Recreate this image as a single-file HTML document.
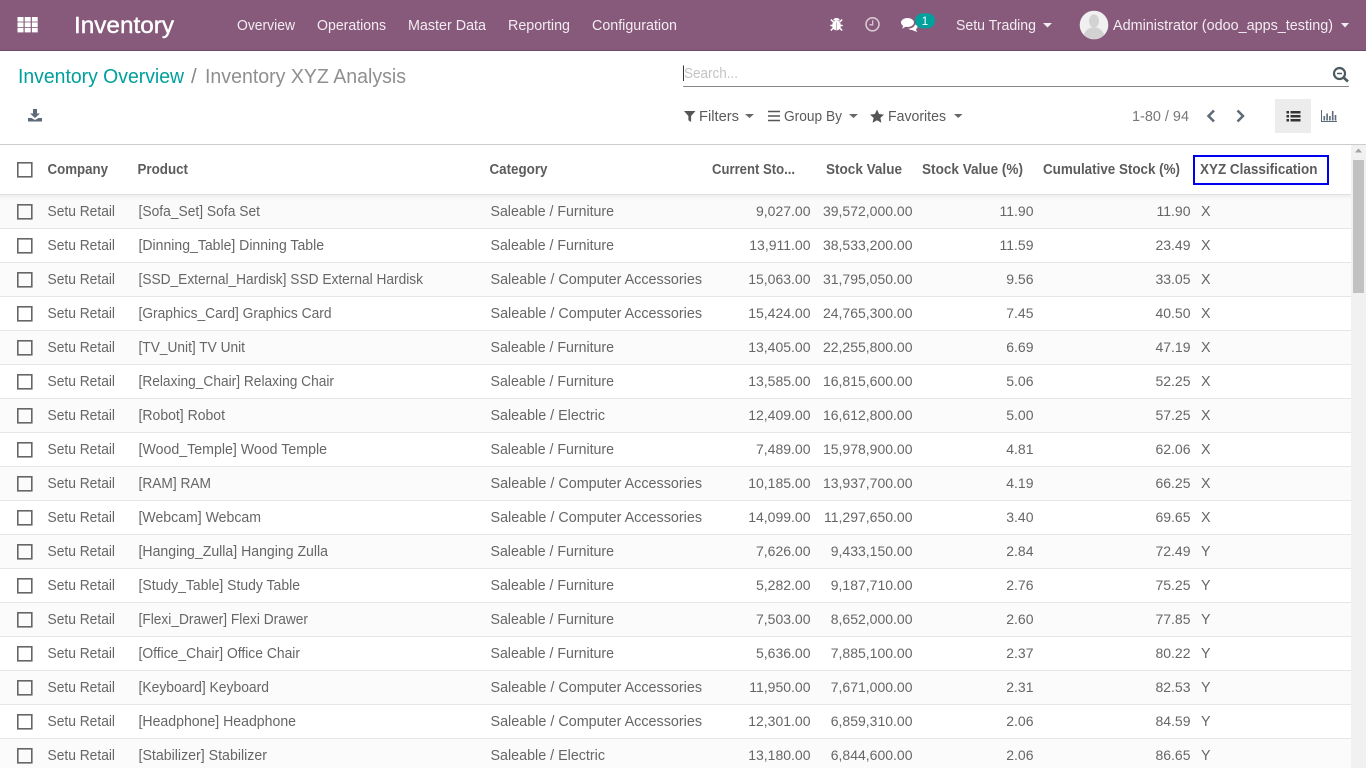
<!DOCTYPE html>
<html><head><meta charset="utf-8"><title>Inventory XYZ Analysis</title>
<style>
html,body{margin:0;padding:0;background:#fff;width:1366px;height:768px;overflow:hidden}
svg{display:block;position:absolute;left:0;top:0}
text{font-family:"Liberation Sans",sans-serif;font-size:14.3px;fill:#666}
.n{fill:#f3ecf1}
.h{font-weight:bold;fill:#5c5c5c}
.e{text-anchor:end;fill:#666;font-size:14px;transform:translateX(-.5px)}
.b{fill:none;stroke:#666;stroke-width:1.6}
.l{fill:#555}
</style></head><body>
<svg width="1366" height="768" viewBox="0 0 1366 768" xmlns="http://www.w3.org/2000/svg">
<defs><linearGradient id="sh" x1="0" y1="0" x2="0" y2="1"><stop offset="0" stop-color="#efefef"/><stop offset="1" stop-color="#fafafa"/></linearGradient></defs>
<rect width="1366" height="50" fill="#875a7b"/>
<rect y="50" width="1366" height="1" fill="#6e4a64"/>
<g fill="#fff">
<rect x="17.5" y="17" width="6" height="4.6"/><rect x="24.7" y="17" width="6" height="4.6"/><rect x="31.9" y="17" width="5.8" height="4.6"/>
<rect x="17.5" y="22.4" width="6" height="4.6"/><rect x="24.7" y="22.4" width="6" height="4.6"/><rect x="31.9" y="22.4" width="5.8" height="4.6"/>
<rect x="17.5" y="27.8" width="6" height="4.6"/><rect x="24.7" y="27.8" width="6" height="4.6"/><rect x="31.9" y="27.8" width="5.8" height="4.6"/>
</g>
<text x="74" y="33" textLength="100" lengthAdjust="spacingAndGlyphs" style="font-size:23.5px;fill:#fff;stroke:#fff;stroke-width:.4">Inventory</text>
<text class="n" x="237" y="30" textLength="58" lengthAdjust="spacingAndGlyphs">Overview</text>
<text class="n" x="317" y="30" textLength="69" lengthAdjust="spacingAndGlyphs">Operations</text>
<text class="n" x="408" y="30" textLength="78" lengthAdjust="spacingAndGlyphs">Master Data</text>
<text class="n" x="508" y="30" textLength="62" lengthAdjust="spacingAndGlyphs">Reporting</text>
<text class="n" x="592" y="30" textLength="85" lengthAdjust="spacingAndGlyphs">Configuration</text>
<g fill="#fff" stroke="#fff">
<ellipse cx="836.5" cy="25.5" rx="4.4" ry="5" stroke="none"/><path d="M833.2 20.5a3.3 2.6 0 0 1 6.6 0z" stroke="none"/>
<path d="M830.8 19.5l2.5 2.5M842.2 19.5l-2.5 2.500M830.3 25.500h3M842.700 25.500h-3M830.800 30.500l2.500-2.500M842.200 30.500l-2.500-2.500" stroke-width="1.500" fill="none"/>
</g>
<rect x="836.100" y="22.500" width=".8" height="8" fill="#b79fb0"/>
<g fill="none" stroke="#d8c8d3" stroke-width="1.600"><circle cx="872.500" cy="24.300" r="6.500"/><path d="M872.700 20.300v4.500h-3.200" stroke-width="1.300"/></g>
<path d="M907.500 18c-3.600 0-6.500 2-6.500 4.500 0 1.400.9 2.600 2.200 3.400l-1.100 2.800 3.500-1.900c.6.100 1.300.2 1.900.2 3.600 0 6.500-2.100 6.500-4.500s-2.900-4.500-6.500-4.500z" fill="#fff"/>
<path d="M915 24.500c-.6 2.600-3.400 4.100-6.800 4.300 1 .8 2.400 1.200 3.900 1.200l5 2-1.200-2.800c1-.7 1.700-1.600 1.700-2.600 0-.8-.9-1.700-2.600-2.100z" fill="#fff"/>
<rect x="915" y="13.300" width="20" height="15" rx="7.500" fill="#00a09d"/>
<text x="925" y="25" text-anchor="middle" style="font-size:11.500px;fill:#fff">1</text>
<text class="n" x="956" y="30" textLength="80" lengthAdjust="spacingAndGlyphs">Setu Trading</text>
<path d="M1043 23h9l-4.500 4.500z" fill="#f3ecf1"/>
<circle cx="1094" cy="25" r="14.300" fill="#f0f0f0"/>
<ellipse cx="1094" cy="21" rx="5" ry="6.500" fill="#d2d2d2"/>
<path d="M1084 35c1-5 5-6.500 7-7.500h6c2 1 6 2.500 7 7.500a14.300 14.300 0 0 1-20 0z" fill="#d2d2d2"/>
<text class="n" x="1113" y="30" textLength="220" lengthAdjust="spacingAndGlyphs">Administrator (odoo_apps_testing)</text>
<path d="M1341 23h8l-4 4.500z" fill="#f3ecf1"/>

<text x="18" y="83" textLength="166" lengthAdjust="spacingAndGlyphs" style="font-size:20.500px;fill:#00a09d">Inventory Overview</text>
<text x="191" y="83" style="font-size:20.500px;fill:#888">/</text>
<text x="205" y="83" textLength="201" lengthAdjust="spacingAndGlyphs" style="font-size:20.500px;fill:#8f8f8f">Inventory XYZ Analysis</text>

<path d="M33 109h4v4.500h3l-5 4.500-5-4.500h3z" fill="#5d6a78"/>
<path d="M28 118h3.500l3.500 2 3.500-2h3.500v3.500h-14z" fill="#5d6a78"/>

<rect x="683" y="65.500" width="1" height="15.500" fill="#333"/>
<text x="684" y="78" textLength="54" lengthAdjust="spacingAndGlyphs" style="fill:#c4c4c4">Search...</text>
<rect x="683" y="86" width="666" height="1" fill="#888"/>
<circle cx="1339.500" cy="73.500" r="5.500" fill="none" stroke="#4c5a60" stroke-width="2.200"/>
<path d="M1337 73.500h5" stroke="#4c5a60" stroke-width="1.500"/>
<path d="M1343.500 77.500l4.500 4" stroke="#4c5a60" stroke-width="2.600"/>

<path d="M684 111h11.500l-4.400 5v6l-2.700-1.800v-4.200z" fill="#555"/>
<text x="699" y="121" textLength="40" lengthAdjust="spacingAndGlyphs" style="fill:#5a5a5a">Filters</text>
<path d="M745 114h9l-4.500 4z" fill="#666"/>
<path d="M768 111.500h12M768 116h12M768 120.500h12" stroke="#555" stroke-width="1.500"/>
<text x="784" y="121" textLength="58" lengthAdjust="spacingAndGlyphs" style="fill:#5a5a5a">Group By</text>
<path d="M849 114h9l-4.500 4z" fill="#666"/>
<path d="M877 109.500l2.100 4.500 4.900.6-3.600 3.300 1 4.800-4.400-2.400-4.400 2.400 1-4.800-3.600-3.300 4.900-.6z" fill="#555"/>
<text x="888" y="121" textLength="58" lengthAdjust="spacingAndGlyphs" style="fill:#5a5a5a">Favorites</text>
<path d="M954 114h8.500l-4.250 4z" fill="#666"/>

<text x="1132" y="121" textLength="57" lengthAdjust="spacingAndGlyphs" style="fill:#777">1-80 / 94</text>
<path d="M1214 110.500l-5.500 5.500 5.500 5.500" fill="none" stroke="#5d6a78" stroke-width="2.500"/>
<path d="M1237.500 110.500l5.500 5.500-5.500 5.500" fill="none" stroke="#5d6a78" stroke-width="2.500"/>
<rect x="1275" y="99" width="36" height="34" fill="#ececec"/>
<g fill="#333"><rect x="1286.500" y="111" width="2.500" height="2.500"/><rect x="1286.500" y="115" width="2.500" height="2.500"/><rect x="1286.500" y="119" width="2.500" height="2.500"/><rect x="1290.500" y="111" width="10" height="2.500"/><rect x="1290.500" y="115" width="10" height="2.500"/><rect x="1290.500" y="119" width="10" height="2.500"/></g>
<path d="M1321.500 110v11.500h15.500" fill="none" stroke="#5d6a78" stroke-width="1"/>
<g fill="#5d6a78"><rect x="1323.500" y="116" width="1.600" height="4.500"/><rect x="1326.300" y="113.500" width="1.600" height="7"/><rect x="1329.100" y="116" width="1.600" height="4.500"/><rect x="1331.900" y="111" width="1.600" height="9.500"/><rect x="1334.700" y="115" width="1.600" height="5.500"/></g>

<rect y="144" width="1366" height="1" fill="#ccc"/>
<rect y="194" width="1351" height="1" fill="#e0e0e0"/>

<rect y="195" width="1351" height="33" fill="#fafafa"/>
<rect y="195" width="1351" height="5" fill="url(#sh)"/>
<rect y="263" width="1351" height="33" fill="#fbfbfb"/>
<rect y="331" width="1351" height="33" fill="#fbfbfb"/>
<rect y="399" width="1351" height="33" fill="#fbfbfb"/>
<rect y="467" width="1351" height="33" fill="#fbfbfb"/>
<rect y="535" width="1351" height="33" fill="#fbfbfb"/>
<rect y="603" width="1351" height="33" fill="#fbfbfb"/>
<rect y="671" width="1351" height="33" fill="#fbfbfb"/>
<rect y="739" width="1351" height="29" fill="#fbfbfb"/>
<g fill="#e6e6e6">
<rect y="228" width="1351" height="1"/><rect y="262" width="1351" height="1"/><rect y="296" width="1351" height="1"/><rect y="330" width="1351" height="1"/><rect y="364" width="1351" height="1"/><rect y="398" width="1351" height="1"/><rect y="432" width="1351" height="1"/><rect y="466" width="1351" height="1"/><rect y="500" width="1351" height="1"/><rect y="534" width="1351" height="1"/><rect y="568" width="1351" height="1"/><rect y="602" width="1351" height="1"/><rect y="636" width="1351" height="1"/><rect y="670" width="1351" height="1"/><rect y="704" width="1351" height="1"/><rect y="738" width="1351" height="1"/>
</g>

<rect class="b" x="17.800" y="162.800" width="14" height="14"/>
<text class="h" x="47.500" y="174" textLength="60.500" lengthAdjust="spacingAndGlyphs">Company</text>
<text class="h" x="137.500" y="174" textLength="50.500" lengthAdjust="spacingAndGlyphs">Product</text>
<text class="h" x="489.500" y="174" textLength="58" lengthAdjust="spacingAndGlyphs">Category</text>
<text class="h" x="712" y="174" textLength="83" lengthAdjust="spacingAndGlyphs">Current Sto...</text>
<text class="h" x="826" y="174" textLength="76" lengthAdjust="spacingAndGlyphs">Stock Value</text>
<text class="h" x="922" y="174" textLength="101" lengthAdjust="spacingAndGlyphs">Stock Value (%)</text>
<text class="h" x="1043" y="174" textLength="137" lengthAdjust="spacingAndGlyphs">Cumulative Stock (%)</text>
<text class="h" x="1200" y="174" textLength="117.500" lengthAdjust="spacingAndGlyphs">XYZ Classification</text>
<rect x="1194" y="156" width="134" height="28" fill="none" stroke="#0000ee" stroke-width="2"/>

<rect class="b" x="17.800" y="204.800" width="14" height="14"/><text x="47.500" y="216" textLength="67.500" lengthAdjust="spacingAndGlyphs">Setu Retail</text><text x="138.500" y="216" textLength="121.500" lengthAdjust="spacingAndGlyphs">[Sofa_Set] Sofa Set</text><text x="490.500" y="216" textLength="123.500" lengthAdjust="spacingAndGlyphs">Saleable / Furniture</text><text class="e" x="811" y="216">9,027.00</text><text class="e" x="913" y="216">39,572,000.00</text><text class="e" x="1034" y="216">11.90</text><text class="e" x="1191" y="216">11.90</text><text x="1201" y="216">X</text>
<rect class="b" x="17.800" y="238.800" width="14" height="14"/><text x="47.500" y="250" textLength="67.500" lengthAdjust="spacingAndGlyphs">Setu Retail</text><text x="138.500" y="250" textLength="185.500" lengthAdjust="spacingAndGlyphs">[Dinning_Table] Dinning Table</text><text x="490.500" y="250" textLength="123.500" lengthAdjust="spacingAndGlyphs">Saleable / Furniture</text><text class="e" x="811" y="250">13,911.00</text><text class="e" x="913" y="250">38,533,200.00</text><text class="e" x="1034" y="250">11.59</text><text class="e" x="1191" y="250">23.49</text><text x="1201" y="250">X</text>
<rect class="b" x="17.800" y="272.800" width="14" height="14"/><text x="47.500" y="284" textLength="67.500" lengthAdjust="spacingAndGlyphs">Setu Retail</text><text x="138.500" y="284" textLength="284.500" lengthAdjust="spacingAndGlyphs">[SSD_External_Hardisk] SSD External Hardisk</text><text x="490.500" y="284" textLength="211.500" lengthAdjust="spacingAndGlyphs">Saleable / Computer Accessories</text><text class="e" x="811" y="284">15,063.00</text><text class="e" x="913" y="284">31,795,050.00</text><text class="e" x="1034" y="284">9.56</text><text class="e" x="1191" y="284">33.05</text><text x="1201" y="284">X</text>
<rect class="b" x="17.800" y="306.800" width="14" height="14"/><text x="47.500" y="318" textLength="67.500" lengthAdjust="spacingAndGlyphs">Setu Retail</text><text x="138.500" y="318" textLength="193" lengthAdjust="spacingAndGlyphs">[Graphics_Card] Graphics Card</text><text x="490.500" y="318" textLength="211.500" lengthAdjust="spacingAndGlyphs">Saleable / Computer Accessories</text><text class="e" x="811" y="318">15,424.00</text><text class="e" x="913" y="318">24,765,300.00</text><text class="e" x="1034" y="318">7.45</text><text class="e" x="1191" y="318">40.50</text><text x="1201" y="318">X</text>
<rect class="b" x="17.800" y="340.800" width="14" height="14"/><text x="47.500" y="352" textLength="67.500" lengthAdjust="spacingAndGlyphs">Setu Retail</text><text x="138.500" y="352" textLength="106.500" lengthAdjust="spacingAndGlyphs">[TV_Unit] TV Unit</text><text x="490.500" y="352" textLength="123.500" lengthAdjust="spacingAndGlyphs">Saleable / Furniture</text><text class="e" x="811" y="352">13,405.00</text><text class="e" x="913" y="352">22,255,800.00</text><text class="e" x="1034" y="352">6.69</text><text class="e" x="1191" y="352">47.19</text><text x="1201" y="352">X</text>
<rect class="b" x="17.800" y="374.800" width="14" height="14"/><text x="47.500" y="386" textLength="67.500" lengthAdjust="spacingAndGlyphs">Setu Retail</text><text x="138.500" y="386" textLength="195.500" lengthAdjust="spacingAndGlyphs">[Relaxing_Chair] Relaxing Chair</text><text x="490.500" y="386" textLength="123.500" lengthAdjust="spacingAndGlyphs">Saleable / Furniture</text><text class="e" x="811" y="386">13,585.00</text><text class="e" x="913" y="386">16,815,600.00</text><text class="e" x="1034" y="386">5.06</text><text class="e" x="1191" y="386">52.25</text><text x="1201" y="386">X</text>
<rect class="b" x="17.800" y="408.800" width="14" height="14"/><text x="47.500" y="420" textLength="67.500" lengthAdjust="spacingAndGlyphs">Setu Retail</text><text x="138.500" y="420" textLength="86.500" lengthAdjust="spacingAndGlyphs">[Robot] Robot</text><text x="490.500" y="420" textLength="114.500" lengthAdjust="spacingAndGlyphs">Saleable / Electric</text><text class="e" x="811" y="420">12,409.00</text><text class="e" x="913" y="420">16,612,800.00</text><text class="e" x="1034" y="420">5.00</text><text class="e" x="1191" y="420">57.25</text><text x="1201" y="420">X</text>
<rect class="b" x="17.800" y="442.800" width="14" height="14"/><text x="47.500" y="454" textLength="67.500" lengthAdjust="spacingAndGlyphs">Setu Retail</text><text x="138.500" y="454" textLength="188.500" lengthAdjust="spacingAndGlyphs">[Wood_Temple] Wood Temple</text><text x="490.500" y="454" textLength="123.500" lengthAdjust="spacingAndGlyphs">Saleable / Furniture</text><text class="e" x="811" y="454">7,489.00</text><text class="e" x="913" y="454">15,978,900.00</text><text class="e" x="1034" y="454">4.81</text><text class="e" x="1191" y="454">62.06</text><text x="1201" y="454">X</text>
<rect class="b" x="17.800" y="476.800" width="14" height="14"/><text x="47.500" y="488" textLength="67.500" lengthAdjust="spacingAndGlyphs">Setu Retail</text><text x="138.500" y="488" textLength="72.500" lengthAdjust="spacingAndGlyphs">[RAM] RAM</text><text x="490.500" y="488" textLength="211.500" lengthAdjust="spacingAndGlyphs">Saleable / Computer Accessories</text><text class="e" x="811" y="488">10,185.00</text><text class="e" x="913" y="488">13,937,700.00</text><text class="e" x="1034" y="488">4.19</text><text class="e" x="1191" y="488">66.25</text><text x="1201" y="488">X</text>
<rect class="b" x="17.800" y="510.800" width="14" height="14"/><text x="47.500" y="522" textLength="67.500" lengthAdjust="spacingAndGlyphs">Setu Retail</text><text x="138.500" y="522" textLength="122.500" lengthAdjust="spacingAndGlyphs">[Webcam] Webcam</text><text x="490.500" y="522" textLength="211.500" lengthAdjust="spacingAndGlyphs">Saleable / Computer Accessories</text><text class="e" x="811" y="522">14,099.00</text><text class="e" x="913" y="522">11,297,650.00</text><text class="e" x="1034" y="522">3.40</text><text class="e" x="1191" y="522">69.65</text><text x="1201" y="522">X</text>
<rect class="b" x="17.800" y="544.800" width="14" height="14"/><text x="47.500" y="556" textLength="67.500" lengthAdjust="spacingAndGlyphs">Setu Retail</text><text x="138.500" y="556" textLength="189.500" lengthAdjust="spacingAndGlyphs">[Hanging_Zulla] Hanging Zulla</text><text x="490.500" y="556" textLength="123.500" lengthAdjust="spacingAndGlyphs">Saleable / Furniture</text><text class="e" x="811" y="556">7,626.00</text><text class="e" x="913" y="556">9,433,150.00</text><text class="e" x="1034" y="556">2.84</text><text class="e" x="1191" y="556">72.49</text><text x="1201" y="556">Y</text>
<rect class="b" x="17.800" y="578.800" width="14" height="14"/><text x="47.500" y="590" textLength="67.500" lengthAdjust="spacingAndGlyphs">Setu Retail</text><text x="138.500" y="590" textLength="161.500" lengthAdjust="spacingAndGlyphs">[Study_Table] Study Table</text><text x="490.500" y="590" textLength="123.500" lengthAdjust="spacingAndGlyphs">Saleable / Furniture</text><text class="e" x="811" y="590">5,282.00</text><text class="e" x="913" y="590">9,187,710.00</text><text class="e" x="1034" y="590">2.76</text><text class="e" x="1191" y="590">75.25</text><text x="1201" y="590">Y</text>
<rect class="b" x="17.800" y="612.800" width="14" height="14"/><text x="47.500" y="624" textLength="67.500" lengthAdjust="spacingAndGlyphs">Setu Retail</text><text x="138.500" y="624" textLength="169.500" lengthAdjust="spacingAndGlyphs">[Flexi_Drawer] Flexi Drawer</text><text x="490.500" y="624" textLength="123.500" lengthAdjust="spacingAndGlyphs">Saleable / Furniture</text><text class="e" x="811" y="624">7,503.00</text><text class="e" x="913" y="624">8,652,000.00</text><text class="e" x="1034" y="624">2.60</text><text class="e" x="1191" y="624">77.85</text><text x="1201" y="624">Y</text>
<rect class="b" x="17.800" y="646.800" width="14" height="14"/><text x="47.500" y="658" textLength="67.500" lengthAdjust="spacingAndGlyphs">Setu Retail</text><text x="138.500" y="658" textLength="161.500" lengthAdjust="spacingAndGlyphs">[Office_Chair] Office Chair</text><text x="490.500" y="658" textLength="123.500" lengthAdjust="spacingAndGlyphs">Saleable / Furniture</text><text class="e" x="811" y="658">5,636.00</text><text class="e" x="913" y="658">7,885,100.00</text><text class="e" x="1034" y="658">2.37</text><text class="e" x="1191" y="658">80.22</text><text x="1201" y="658">Y</text>
<rect class="b" x="17.800" y="680.800" width="14" height="14"/><text x="47.500" y="692" textLength="67.500" lengthAdjust="spacingAndGlyphs">Setu Retail</text><text x="138.500" y="692" textLength="130.500" lengthAdjust="spacingAndGlyphs">[Keyboard] Keyboard</text><text x="490.500" y="692" textLength="211.500" lengthAdjust="spacingAndGlyphs">Saleable / Computer Accessories</text><text class="e" x="811" y="692">11,950.00</text><text class="e" x="913" y="692">7,671,000.00</text><text class="e" x="1034" y="692">2.31</text><text class="e" x="1191" y="692">82.53</text><text x="1201" y="692">Y</text>
<rect class="b" x="17.800" y="714.800" width="14" height="14"/><text x="47.500" y="726" textLength="67.500" lengthAdjust="spacingAndGlyphs">Setu Retail</text><text x="138.500" y="726" textLength="157.500" lengthAdjust="spacingAndGlyphs">[Headphone] Headphone</text><text x="490.500" y="726" textLength="211.500" lengthAdjust="spacingAndGlyphs">Saleable / Computer Accessories</text><text class="e" x="811" y="726">12,301.00</text><text class="e" x="913" y="726">6,859,310.00</text><text class="e" x="1034" y="726">2.06</text><text class="e" x="1191" y="726">84.59</text><text x="1201" y="726">Y</text>
<rect class="b" x="17.800" y="748.800" width="14" height="14"/><text x="47.500" y="760" textLength="67.500" lengthAdjust="spacingAndGlyphs">Setu Retail</text><text x="138.500" y="760" textLength="128.500" lengthAdjust="spacingAndGlyphs">[Stabilizer] Stabilizer</text><text x="490.500" y="760" textLength="114.500" lengthAdjust="spacingAndGlyphs">Saleable / Electric</text><text class="e" x="811" y="760">13,180.00</text><text class="e" x="913" y="760">6,844,600.00</text><text class="e" x="1034" y="760">2.06</text><text class="e" x="1191" y="760">86.65</text><text x="1201" y="760">Y</text>

<rect x="1351" y="145" width="15" height="623" fill="#f1f1f1"/>
<rect x="1353" y="160" width="11" height="133" fill="#c1c1c1"/>
<path d="M1358.500 148.500l-3.500 4h7z" fill="#a3a3a3"/>
</svg>
</body></html>
